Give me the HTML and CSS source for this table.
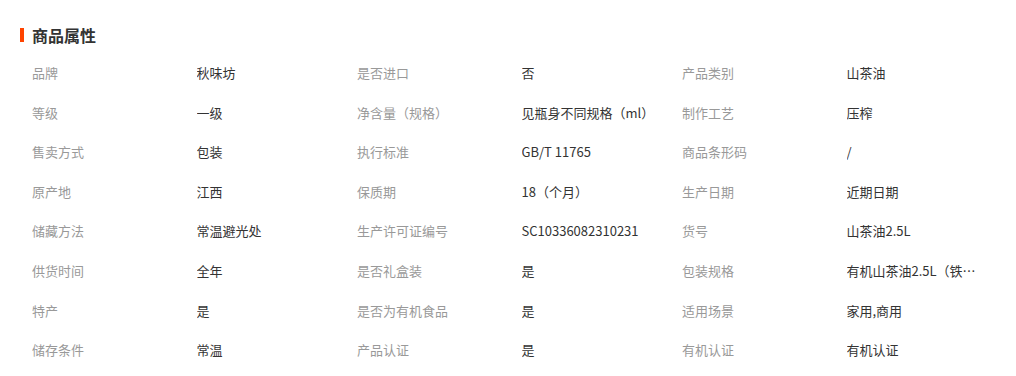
FILE: index.html
```html
<!DOCTYPE html>
<html lang="zh-CN">
<head>
<meta charset="utf-8">
<title>商品属性</title>
<link rel="stylesheet" href="styles.css">
</head>
<body>
<section class="attrs">
  <h2 class="attrs-title">商品属性</h2>
  <div class="attrs-grid">
    <div class="label">品牌</div><div class="value">秋味坊</div>
    <div class="label">是否进口</div><div class="value">否</div>
    <div class="label">产品类别</div><div class="value">山茶油</div>

    <div class="label">等级</div><div class="value">一级</div>
    <div class="label">净含量（规格）</div><div class="value">见瓶身不同规格（ml）</div>
    <div class="label">制作工艺</div><div class="value">压榨</div>

    <div class="label">售卖方式</div><div class="value">包装</div>
    <div class="label">执行标准</div><div class="value">GB/T 11765</div>
    <div class="label">商品条形码</div><div class="value">/</div>

    <div class="label">原产地</div><div class="value">江西</div>
    <div class="label">保质期</div><div class="value">18（个月）</div>
    <div class="label">生产日期</div><div class="value">近期日期</div>

    <div class="label">储藏方法</div><div class="value">常温避光处</div>
    <div class="label">生产许可证编号</div><div class="value">SC10336082310231</div>
    <div class="label">货号</div><div class="value">山茶油2.5L</div>

    <div class="label">供货时间</div><div class="value">全年</div>
    <div class="label">是否礼盒装</div><div class="value">是</div>
    <div class="label">包装规格</div><div class="value">有机山茶油2.5L（铁桶装）</div>

    <div class="label">特产</div><div class="value">是</div>
    <div class="label">是否为有机食品</div><div class="value">是</div>
    <div class="label">适用场景</div><div class="value">家用,商用</div>

    <div class="label">储存条件</div><div class="value">常温</div>
    <div class="label">产品认证</div><div class="value">是</div>
    <div class="label">有机认证</div><div class="value">有机认证</div>
  </div>
</section>
</body>
</html>
```
FILE: styles.css
```css
html, body {
  margin: 0;
  padding: 0;
  background: #ffffff;
}

body {
  font-family: "Noto Sans CJK SC", "Microsoft YaHei", "Noto Sans", sans-serif;
  font-size: 13px;
  color: #333333;
}

.attrs {
  padding: 25px 0 0 20px;
}

.attrs-title {
  display: flex;
  align-items: center;
  gap: 8px;
  margin: 0;
  height: 20px;
  line-height: 20px;
  font-size: 16px;
  font-weight: bold;
  color: #333333;
}

.attrs-title::before {
  content: "";
  width: 4px;
  height: 14px;
  background: #ff4400;
}

.attrs-grid {
  display: grid;
  grid-template-columns: repeat(3, 164.5px 160.5px);
  grid-auto-rows: 39.6px;
  margin: 8px 0 0 12px;
}

.label,
.value {
  line-height: 39.6px;
  white-space: nowrap;
  overflow: hidden;
  text-overflow: ellipsis;
}

.label {
  color: #999999;
}

.value {
  color: #333333;
  padding-right: 26px;
}
```
